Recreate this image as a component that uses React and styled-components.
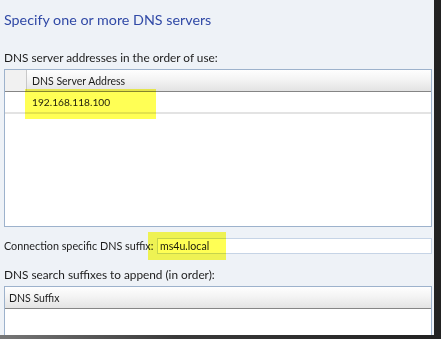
import React from "react";
import styled, { createGlobalStyle } from "styled-components";

const GlobalStyle = createGlobalStyle`
  html, body {
    margin: 0;
    padding: 0;
    background: #2f2f2f;
  }
`;

const Page = styled.div`
  width: 441px;
  height: 339px;
  overflow: hidden;
  background: linear-gradient(90deg, #777777 0%, #3a3a3a 40%, #222222 100%);
  font-family: Lato, "Noto Sans", sans-serif;
`;

const Panel = styled.div`
  position: relative;
  width: 434px;
  height: 335px;
  overflow: hidden;
  background: #eef2f7;
  box-sizing: border-box;
  padding: 0 2px 0 4px;
  display: flex;
  flex-direction: column;

  & > * {
    flex-shrink: 0;
  }
`;

const Title = styled.h1`
  margin: 0;
  padding-top: 10px;
  height: 36px;
  box-sizing: border-box;
  font-weight: normal;
  font-size: 14.3px;
  line-height: 20px;
  color: #3049a6;
`;

const Label = styled.div`
  font-size: ${(p) => p.$size || 11.8}px;
  line-height: 16px;
  color: #1c1c1c;
  white-space: nowrap;
  margin-top: ${(p) => p.$top || 0}px;
`;

const Table = styled.div`
  margin-top: 3px;
  height: ${(p) => p.$height}px;
  border: 1px solid #9db2cc;
  background: #ffffff;
  display: flex;
  flex-direction: column;
`;

const HeaderRow = styled.div`
  display: flex;
  height: 21px;
  border-bottom: 1px solid #858585;
`;

const Corner = styled.div`
  width: 21px;
  background: #f1f1f1;
  border-right: 1px solid #c8c8c8;
`;

const HeaderCell = styled.div`
  flex: 1;
  display: flex;
  align-items: center;
  padding-left: ${(p) => p.$pad}px;
  font-size: 10.5px;
  color: #1c1c1c;
  background: linear-gradient(180deg, #fefefe 0%, #f4f4f4 45%, #e3e3e3 100%);
`;

const DataRow = styled.div`
  display: flex;
  height: 20px;
  border-bottom: 2px solid #e3e3e3;
`;

const RowHead = styled.div`
  width: 22px;
`;

const DataCell = styled.div`
  flex: 1;
  display: flex;
  align-items: center;
  padding-left: 5px;
  font-size: 10.2px;
  color: #1c1c1c;
`;

const SuffixRow = styled.div`
  display: flex;
  align-items: center;
  margin-top: 11px;
  height: 16px;

  & > ${Label} {
    width: 153px;
  }
`;

const SuffixInput = styled.div`
  flex: 1;
  height: 14px;
  border: 1px solid #c6d4e6;
  background: #ffffff;
  display: flex;
  align-items: center;
  padding-left: 2px;
  font-size: 10.6px;
  color: #1c1c1c;
`;

const Marker = styled.div`
  position: absolute;
  left: ${(p) => p.$x}px;
  top: ${(p) => p.$y}px;
  width: ${(p) => p.$w}px;
  height: ${(p) => p.$h}px;
  background: #ffff55;
  mix-blend-mode: multiply;
  pointer-events: none;
`;

export default function App() {
  return (
    <Page>
      <GlobalStyle />
      <Panel>
        <Title>Specify one or more DNS servers</Title>
        <Label $top={14}>DNS server addresses in the order of use:</Label>
        <Table $height={156}>
          <HeaderRow>
            <Corner />
            <HeaderCell $pad={5}>DNS Server Address</HeaderCell>
          </HeaderRow>
          <DataRow>
            <RowHead />
            <DataCell>192.168.118.100</DataCell>
          </DataRow>
        </Table>
        <SuffixRow>
          <Label $size={10.8}>Connection specific DNS suffix:</Label>
          <SuffixInput>ms4u.local</SuffixInput>
        </SuffixRow>
        <Label $top={13}>DNS search suffixes to append (in order):</Label>
        <Table $height={80}>
          <HeaderRow>
            <HeaderCell $pad={4}>DNS Suffix</HeaderCell>
          </HeaderRow>
        </Table>
        <Marker $x={25} $y={89} $w={131} $h={30} />
        <Marker $x={148} $y={232} $w={78} $h={28} />
      </Panel>
    </Page>
  );
}
